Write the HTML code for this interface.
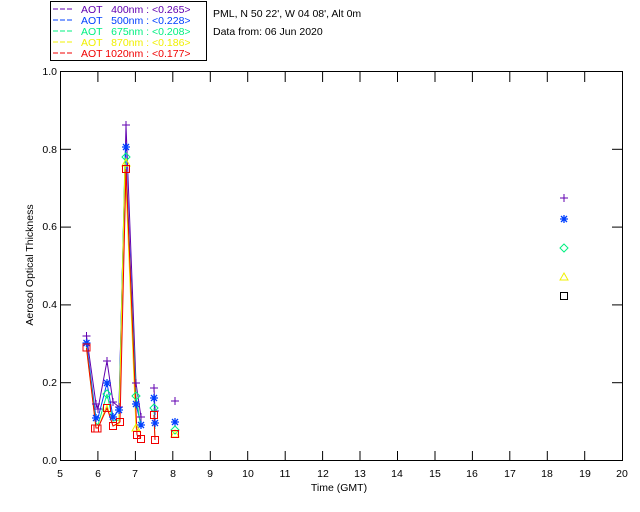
<!DOCTYPE html>
<html><head><style>body{margin:0;background:#fff}svg{display:block}text{font-family:"Liberation Sans",sans-serif;font-size:10.5px;white-space:pre}</style></head><body>
<svg width="640" height="512" xmlns="http://www.w3.org/2000/svg">
<rect x="50.5" y="1.5" width="156" height="59" fill="none" stroke="#000"/>
<g font-size="10.5">
<line x1="53" y1="9" x2="73" y2="9" stroke="#6000b0" stroke-dasharray="5,2"/><text x="81" y="13" fill="#6000b0" xml:space="preserve">AOT   400nm : &lt;0.265&gt;</text>
<line x1="53" y1="20" x2="73" y2="20" stroke="#0040ff" stroke-dasharray="5,2"/><text x="81" y="24" fill="#0040ff" xml:space="preserve">AOT   500nm : &lt;0.228&gt;</text>
<line x1="53" y1="31" x2="73" y2="31" stroke="#00f080" stroke-dasharray="5,2"/><text x="81" y="35" fill="#00f080" xml:space="preserve">AOT   675nm : &lt;0.208&gt;</text>
<line x1="53" y1="42" x2="73" y2="42" stroke="#f0f000" stroke-dasharray="5,2"/><text x="81" y="46" fill="#f0f000" xml:space="preserve">AOT   870nm : &lt;0.186&gt;</text>
<line x1="53" y1="53" x2="73" y2="53" stroke="#f00000" stroke-dasharray="5,2"/><text x="81" y="57" fill="#f00000" xml:space="preserve">AOT 1020nm : &lt;0.177&gt;</text>
</g>
<text x="213" y="17">PML, N 50 22', W 04 08', Alt 0m</text>
<text x="213" y="35">Data from: 06 Jun 2020</text>
<rect x="60.5" y="71.5" width="562" height="389" fill="none" stroke="#000"/>
<g stroke="#000">
<line x1="97.9" y1="461" x2="97.9" y2="451"/><line x1="135.4" y1="461" x2="135.4" y2="451"/><line x1="172.8" y1="461" x2="172.8" y2="451"/><line x1="210.3" y1="461" x2="210.3" y2="451"/><line x1="247.7" y1="461" x2="247.7" y2="451"/><line x1="285.2" y1="461" x2="285.2" y2="451"/><line x1="322.6" y1="461" x2="322.6" y2="451"/><line x1="360" y1="461" x2="360" y2="451"/><line x1="397.5" y1="461" x2="397.5" y2="451"/><line x1="435" y1="461" x2="435" y2="451"/><line x1="472.4" y1="461" x2="472.4" y2="451"/><line x1="509.8" y1="461" x2="509.8" y2="451"/><line x1="547.3" y1="461" x2="547.3" y2="451"/><line x1="584.7" y1="461" x2="584.7" y2="451"/>
<line x1="97.9" y1="72" x2="97.9" y2="82"/><line x1="135.4" y1="72" x2="135.4" y2="82"/><line x1="172.8" y1="72" x2="172.8" y2="82"/><line x1="210.3" y1="72" x2="210.3" y2="82"/><line x1="247.7" y1="72" x2="247.7" y2="82"/><line x1="285.2" y1="72" x2="285.2" y2="82"/><line x1="322.6" y1="72" x2="322.6" y2="82"/><line x1="360" y1="72" x2="360" y2="82"/><line x1="397.5" y1="72" x2="397.5" y2="82"/><line x1="435" y1="72" x2="435" y2="82"/><line x1="472.4" y1="72" x2="472.4" y2="82"/><line x1="509.8" y1="72" x2="509.8" y2="82"/><line x1="547.3" y1="72" x2="547.3" y2="82"/><line x1="584.7" y1="72" x2="584.7" y2="82"/>
<line x1="61" y1="382.7" x2="71" y2="382.7"/><line x1="61" y1="304.9" x2="71" y2="304.9"/><line x1="61" y1="227.1" x2="71" y2="227.1"/><line x1="61" y1="149.3" x2="71" y2="149.3"/>
<line x1="622" y1="382.7" x2="612" y2="382.7"/><line x1="622" y1="304.9" x2="612" y2="304.9"/><line x1="622" y1="227.1" x2="612" y2="227.1"/><line x1="622" y1="149.3" x2="612" y2="149.3"/>
</g>
<g text-anchor="middle">
<text x="60" y="477">5</text><text x="98" y="477">6</text><text x="135" y="477">7</text><text x="173" y="477">8</text><text x="210" y="477">9</text><text x="248" y="477">10</text><text x="285" y="477">11</text><text x="323" y="477">12</text><text x="360" y="477">13</text><text x="397" y="477">14</text><text x="435" y="477">15</text><text x="472" y="477">16</text><text x="510" y="477">17</text><text x="547" y="477">18</text><text x="585" y="477">19</text><text x="622" y="477">20</text>
<text x="339" y="491">Time (GMT)</text>
</g>
<g text-anchor="end">
<text x="57" y="464">0.0</text><text x="57" y="386">0.2</text><text x="57" y="308">0.4</text><text x="57" y="230">0.6</text><text x="57" y="153">0.8</text><text x="57" y="75">1.0</text>
</g>
<text transform="translate(33,265) rotate(-90)" text-anchor="middle" font-size="9.5">Aerosol Optical Thickness</text>
<g fill="none" stroke-width="1">
<polyline stroke="#6000b0" points="86.5,336 96,404 98,409 107,361 113,402 119,407 126,125 136,383 141,417"/><polyline stroke="#6000b0" points="154,388 155,411"/>
<polyline stroke="#0040ff" points="86.5,343 96,418 98,418 107,383 113,417 119,410 125.5,147 136,404 141,425"/><polyline stroke="#0040ff" points="154,398 155,423"/>
<polyline stroke="#00f080" points="86.5,347 96,423 98,425 107,394 113,421 119,420 125,157 136,396 141,427"/><polyline stroke="#00f080" points="154,408 155,429"/>
<polyline stroke="#f0f000" points="86.5,349 96,428 98,428 107,405 113,426 119,424 125,163 136,428 141,433"/><polyline stroke="#f0f000" points="154,422 155,438"/>
<polyline stroke="#f00000" points="86.5,348 96,428 98,428 107,408 113,426 120,422 126,169 137,435 141,438"/><polyline stroke="#f00000" points="154,415 155,440"/>
</g>
<g stroke="#6000b0" fill="none">
<path d="M82.5 336h8M86.5 332v8M92 404h8M96 400v8M94 409h8M98 405v8M103 361h8M107 357v8M109 402h8M113 398v8M115 407h8M119 403v8M122 125h8M126 121v8M132 383h8M136 379v8M137 417h8M141 413v8M150 388h8M154 384v8M151 411h8M155 407v8M171 401h8M175 397v8M560 198h8M564 194v8"/>
</g>
<g stroke="#0040ff" stroke-width="1.3" fill="none">
<path d="M82.5 343h8M86.5 339v8M83.5 340l6 6M89.5 340l-6 6M92 418h8M96 414v8M93 415l6 6M99 415l-6 6M103 383h8M107 379v8M104 380l6 6M110 380l-6 6M109 417h8M113 413v8M110 414l6 6M116 414l-6 6M115 410h8M119 406v8M116 407l6 6M122 407l-6 6M122 147h8M126 143v8M123 144l6 6M129 144l-6 6M132 404h8M136 400v8M133 401l6 6M139 401l-6 6M137 425h8M141 421v8M138 422l6 6M144 422l-6 6M150 398h8M154 394v8M151 395l6 6M157 395l-6 6M151 423h8M155 419v8M152 420l6 6M158 420l-6 6M171 422h8M175 418v8M172 419l6 6M178 419l-6 6M560 219h8M564 215v8M561 216l6 6M567 216l-6 6"/>
</g>
<g stroke="#00f080" fill="none">
<path d="M126 153l4 4-4 4-4-4zM107 390l4 4-4 4-4-4zM136 392l4 4-4 4-4-4zM154 404l4 4-4 4-4-4zM175 426l4 4-4 4-4-4zM564 244l4 4-4 4-4-4z"/>
</g>
<g stroke="#f0f000" fill="none">
<path d="M126 159l4 7h-8zM136 424l4 7h-8zM175 430l4 7h-8zM564 273l4 7h-8z"/>
</g>
<g stroke="#f00000" fill="none">
<rect x="83" y="344" width="7" height="7"/><rect x="91.5" y="425" width="7" height="7"/><rect x="94" y="425" width="7" height="7"/><rect x="103.5" y="404.5" width="7" height="7"/><rect x="109.5" y="422.5" width="7" height="7"/><rect x="116.5" y="418.5" width="7" height="7"/><rect x="122.5" y="165.5" width="7" height="7"/><rect x="133.5" y="431.5" width="7" height="7"/><rect x="137.5" y="435.5" width="7" height="7"/><rect x="150.5" y="411.5" width="7" height="7"/><rect x="151.5" y="436.5" width="7" height="7"/><rect x="171.5" y="430.5" width="7" height="7"/>
</g>
<rect x="560.5" y="292.5" width="7" height="7" fill="none" stroke="#000"/>
</svg>
</body></html>
